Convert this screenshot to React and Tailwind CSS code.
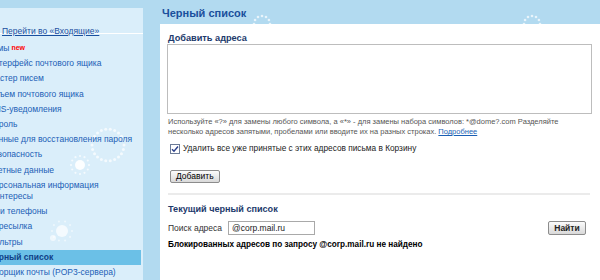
import React from "react";

const items = [
  { t: "Темы", isNew: true },
  { t: "Интерфейс почтового ящика" },
  { t: "Мастер писем" },
  { t: "Объем почтового ящика" },
  { t: "SMS-уведомления" },
  { t: "Пароль" },
  { t: "Данные для восстановления пароля" },
  { t: "Безопасность" },
  { t: "Учетные данные" },
  { t: "Персональная информация", t2: "и интересы" },
  { t: "Мои телефоны" },
  { t: "Пересылка" },
  { t: "Фильтры" },
  { t: "Черный список", active: true },
  { t: "Сборщик почты (POP3-сервера)" },
];

function DotRing({ cx, cy, r, n = 12, dot = 1.6, op = 0.8 }) {
  const dots = [];
  for (let i = 0; i < n; i++) {
    const a = (i / n) * Math.PI * 2;
    dots.push(
      <circle key={i} cx={cx + r * Math.cos(a)} cy={cy + r * Math.sin(a)} r={dot} fill="#ffffff" opacity={op} />
    );
  }
  return <g>{dots}</g>;
}

export default function App() {
  return (
    <div className="relative w-[600px] h-[280px] overflow-hidden bg-[#b2daf0] flex font-['Liberation_Sans',Arial,sans-serif]">
      <svg className="absolute left-0 top-0 pointer-events-none" width="600" height="280">
        <DotRing cx={262} cy={24} r={8} n={12} dot={1.3} op={0.7} />
        <DotRing cx={532} cy={24} r={8} n={12} dot={1.3} op={0.7} />
      </svg>

      <aside className="relative w-[143px] mt-[8px] shrink-0 bg-[#daeefa] overflow-hidden">
        <svg className="absolute left-0 top-0 pointer-events-none" width="143" height="272">
          <DotRing cx={108} cy={137} r={16} n={22} dot={1.5} op={0.7} />
          <circle cx={80} cy={157} r={5} fill="#ffffff" opacity="0.9" />
          <DotRing cx={80} cy={157} r={9} n={12} dot={1.1} op={0.7} />
          <circle cx={62} cy={223} r={6} fill="#ffffff" opacity="0.7" />
          <circle cx={53} cy={230} r={3} fill="#ffffff" opacity="0.6" />
          <DotRing cx={62} cy={223} r={10} n={10} dot={1.1} op={0.5} />
        </svg>
        <div className="relative h-[26px] pl-[2px] pt-[9px] border-b border-white">
          <a className="text-[8.5px] leading-[10px] text-[#1a4f9f] underline">Перейти во «Входящие»</a>
        </div>
        <ul className="relative pt-[7px] ml-[-12px] w-[155px]">
          {items.map((it, i) => (
            <li
              key={i}
              className={
                "px-0 py-[2px] text-[8.5px] leading-[11.2px] whitespace-nowrap " +
                (it.active ? "bg-[#6bc0e7] text-[#0f3f86] font-bold mr-[2px]" : "text-[#2160b6]")
              }
            >
              {it.t}
              {it.isNew && (
                <sup className="ml-[2px] text-[7px] font-bold text-[#ff0000] relative top-[-1px]">new</sup>
              )}
              {it.t2 && (
                <>
                  <br />
                  {it.t2}
                </>
              )}
            </li>
          ))}
        </ul>
      </aside>

      <main className="ml-[17px] flex-1 flex flex-col">
        <h1 className="h-[24px] pl-[2px] pt-[6px] text-[11px] leading-[14px] font-bold text-[#1a4f9c]">
          Черный список
        </h1>
        <div className="flex-1 bg-white pl-[7px] pr-[8px] pt-[9px]">
          <h2 className="ml-[1px] text-[9.2px] leading-[11px] font-bold text-[#1d3a6c]">Добавить адреса</h2>
          <textarea className="mt-[0px] block w-full h-[70px] border border-[#bdbdbd] bg-white resize-none outline-none" />
          <p className="ml-[1px] mt-[3px] text-[7.5px] leading-[10px] text-[#555555]">
            Используйте «?» для замены любого символа, а «*» - для замены набора символов: *@dome?.com Разделяйте
            <br />
            несколько адресов запятыми, пробелами или вводите их на разных строках.{" "}
            <a className="text-[#1a5fb4] underline">Подробнее</a>
          </p>
          <label className="mt-[6px] ml-[3px] flex items-center gap-[3px] text-[8.3px] leading-[11px] text-[#222222]">
            <span className="w-[10px] h-[10px] border border-[#6c7c98] bg-white flex items-center justify-center">
              <svg width="8" height="8" viewBox="0 0 8 8">
                <path d="M1 4.2 L3 6.2 L7 1.5" stroke="#2a3f8a" strokeWidth="1.4" fill="none" />
              </svg>
            </span>
            Удалить все уже принятые с этих адресов письма в Корзину
          </label>
          <button className="mt-[16px] ml-[3px] h-[13px] px-[5px] border border-[#8c8c8c] rounded-[2px] bg-gradient-to-b from-[#fbfbfb] to-[#d9d9d9] text-[8.5px] leading-[11px] text-black">
            Добавить
          </button>
          <div className="mt-[7px] ml-[1px] mr-[2px] h-[2px] bg-[#ebebeb]" />
          <h2 className="mt-[9px] ml-[1px] text-[9.1px] leading-[11px] font-bold text-[#1d3a6c]">
            Текущий черный список
          </h2>
          <div className="mt-[6px] ml-[1px] flex items-center">
            <span className="text-[8.5px] leading-[11px] text-[#333333]">Поиск адреса</span>
            <div className="ml-[6px] w-[87px] h-[14px] border border-[#a9a9a9] pl-[3px] text-[8.5px] leading-[12px] text-[#222222]">
              @corp.mail.ru
            </div>
            <button className="ml-auto mr-[6px] h-[14px] w-[38px] border border-[#8c8c8c] rounded-[2px] bg-gradient-to-b from-[#fbfbfb] to-[#d9d9d9] text-[8.5px] leading-[11px] font-bold text-[#222222]">
              Найти
            </button>
          </div>
          <p className="mt-[4px] ml-[1px] text-[8.2px] leading-[11px] font-bold text-black">
            Блокированных адресов по запросу @corp.mail.ru не найдено
          </p>
        </div>
      </main>
    </div>
  );
}
